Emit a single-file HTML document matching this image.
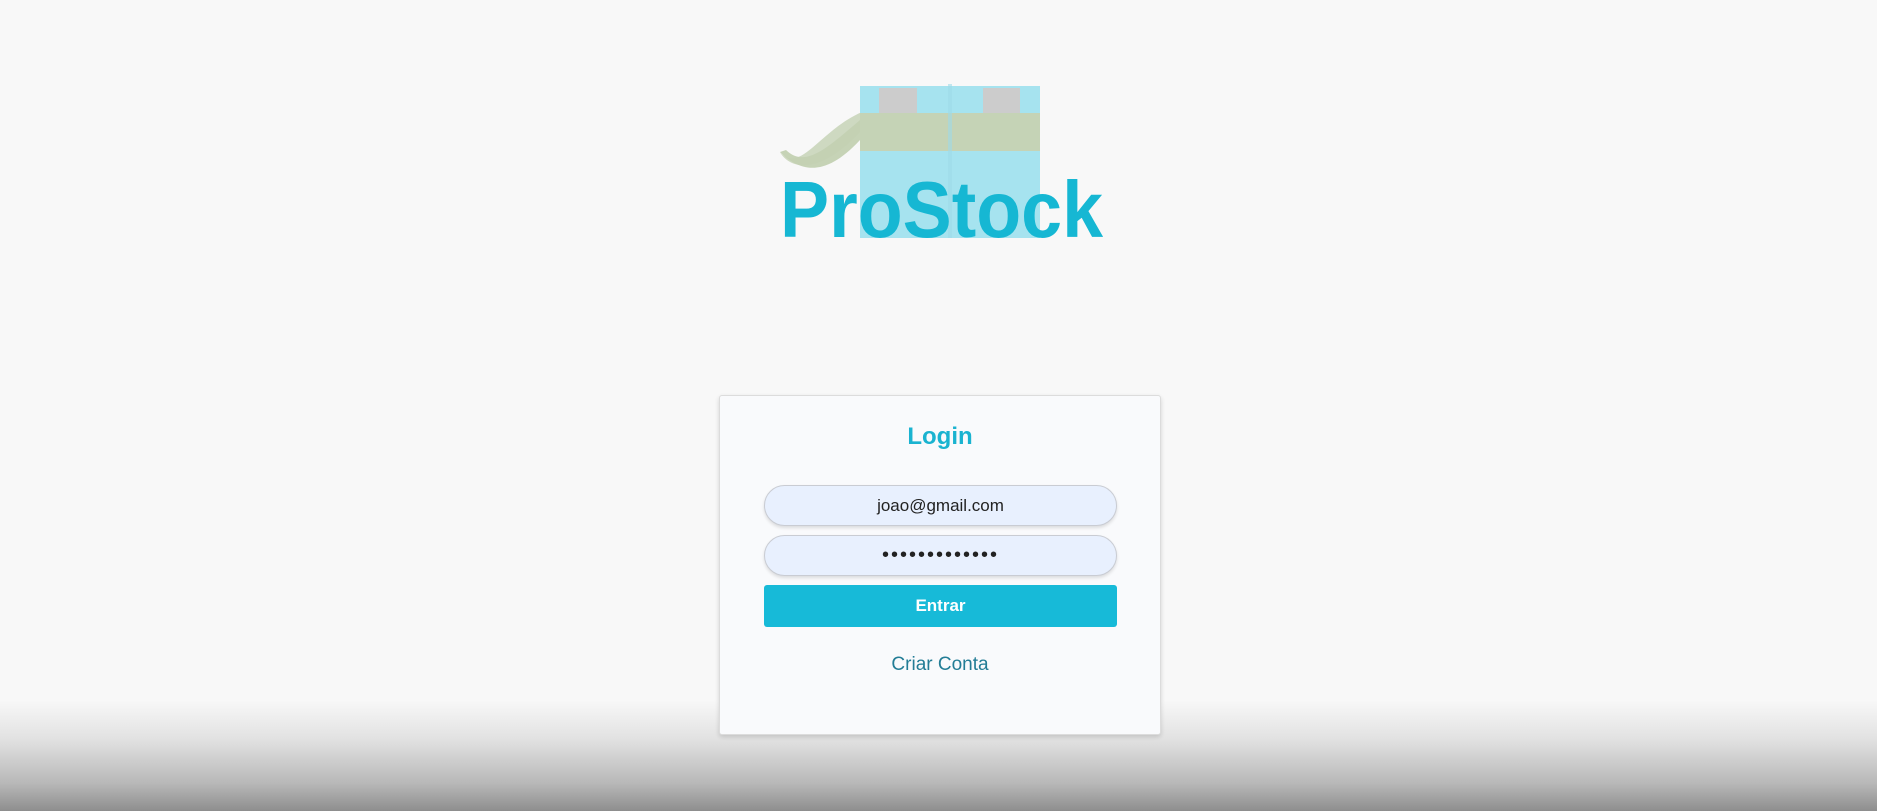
<!DOCTYPE html>
<html><head><meta charset="utf-8"><style>
html,body{margin:0;padding:0}
body{width:1877px;height:811px;position:relative;overflow:hidden;background:#f8f8f8;font-family:"Liberation Sans",sans-serif}
.grad{position:absolute;left:0;right:0;top:700px;height:111px;background:linear-gradient(#f8f8f8,#e2e2e2 35%,#b8b8b8 75%,#8e8e8e)}
.card{position:absolute;left:719px;top:395px;width:442px;height:340px;background:#f9fafc;border:1px solid #dcdcdc;border-radius:3px;box-shadow:0 2px 5px rgba(0,0,0,.15);box-sizing:border-box}
.t{position:absolute;left:0;right:0;text-align:center}
.inp{position:absolute;left:44px;width:353px;height:41px;border:1px solid #c9ccd3;border-radius:21px;background:#e8f0fe;box-shadow:0 2px 3px rgba(0,0,0,.12);box-sizing:border-box;text-align:center;line-height:39px;font-size:17px;color:#222}
.btn{position:absolute;left:44px;top:189px;width:353px;height:42px;background:#17bad8;border-radius:3px;color:#fff;font-weight:bold;font-size:17px;text-align:center;line-height:42px}
</style></head><body>
<div class="grad"></div>
<svg style="position:absolute;left:0;top:0" width="1877" height="300">
<path d="M780 152 C800 172 825 178 860 140 L860 120 C825 150 805 168 786 150 Z" fill="#c6d3b6"/>
<path d="M780 152 C790 170 820 175 860 132 L862 112 C820 130 800 175 780 152Z" fill="#c3d1b3" opacity=".8"/>
<rect x="860" y="86" width="180" height="152" fill="#a6e3ef"/>
<rect x="879" y="88" width="38" height="25" fill="#cccccc"/>
<rect x="983" y="88" width="37" height="25" fill="#cccccc"/>
<rect x="860" y="113" width="180" height="38" fill="#c5d3b6"/>
<rect x="948" y="84" width="4" height="154" fill="#9fdbe8" opacity=".6"/>
<text x="780" y="237" font-family="Liberation Sans" font-weight="bold" font-size="80" fill="#16b7d3" textLength="323" lengthAdjust="spacingAndGlyphs">ProStock</text>
</svg>
<div class="card">
<div class="t" style="top:27px;font-size:24px;font-weight:bold;color:#1ab3d0">Login</div>
<div class="inp" style="top:89px">joao@gmail.com</div>
<div class="inp" style="top:139px;font-size:20px;letter-spacing:2px">•••••••••••••</div>
<div class="btn">Entrar</div>
<div class="t" style="top:258px;font-size:19px;color:#237d96">Criar Conta</div>
</div>
</body></html>
